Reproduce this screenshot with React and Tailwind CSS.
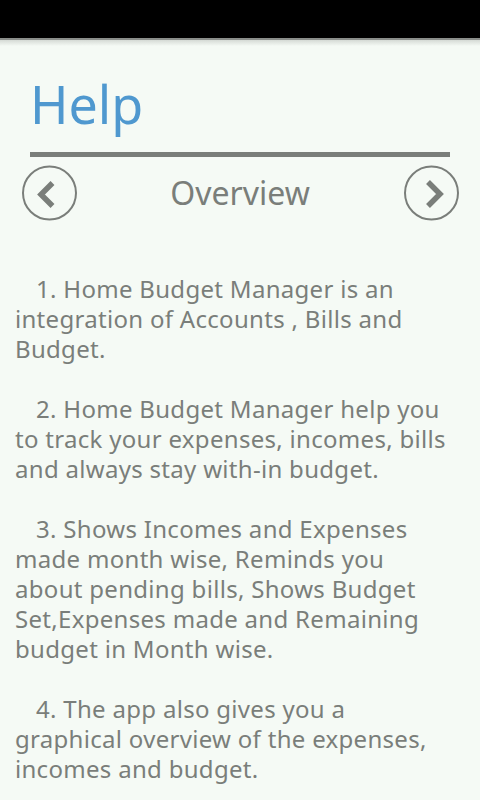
import React from "react";

const paragraphs = [
  "1. Home Budget Manager is an integration of Accounts , Bills and Budget.",
  "2. Home Budget Manager help you to track your expenses, incomes, bills and always stay with-in budget.",
  "3. Shows Incomes and Expenses made month wise, Reminds you about pending bills, Shows Budget Set,Expenses made and Remaining budget in Month wise.",
  "4. The app also gives you a graphical overview of the expenses, incomes and budget.",
];

const NavButton = ({ dir }) => (
  <button className="w-[56px] h-[56px] flex items-center justify-center">
    <svg width="56" height="56" viewBox="0 0 56 56">
      <circle cx="28.5" cy="28" r="26.5" fill="none" stroke="#7a7e7a" strokeWidth="2" />
      {dir === "left" ? (
        <path d="M31.5 18 L20 29.5 L31.5 41" fill="none" stroke="#7a7e7a" strokeWidth="5.5" strokeLinejoin="miter" />
      ) : (
        <path d="M25 17 L37 29 L25 41" fill="none" stroke="#7a7e7a" strokeWidth="5.5" strokeLinejoin="miter" />
      )}
    </svg>
  </button>
);

const App = () => {
  return (
    <div
      className="w-[480px] h-[800px] overflow-hidden flex flex-col bg-[#f5faf5]"
      style={{ fontFamily: '"Noto Sans", "Open Sans", sans-serif' }}
    >
      <div className="h-[38px] bg-black shrink-0" />
      <div className="h-[2px] bg-[#8a8d8a] shrink-0" />
      <div className="h-[6px] bg-gradient-to-b from-[#d5dad5] to-[#f5faf5] shrink-0" />

      <div className="px-[30px] pt-[28px]">
        <h1 className="text-[52px] leading-[60px] text-[#4f98cf]">Help</h1>
        <div className="mt-[18px] h-[5px] bg-[#7a7e7a]" />
      </div>

      <div className="flex items-center justify-between px-[21px] mt-[8px]">
        <NavButton dir="left" />
        <span className="text-[32px] leading-[40px] text-[#7a7e7a]">Overview</span>
        <NavButton dir="right" />
      </div>

      <div className="pl-[15px] pr-[27px] mt-[53px] text-[24px] leading-[30px] tracking-[0.3px] text-[#7a7e7a]">
        {paragraphs.map((p, i) => (
          <p key={i} className="mb-[30px] indent-[21px]">
            {p}
          </p>
        ))}
      </div>
    </div>
  );
};

export default App;
